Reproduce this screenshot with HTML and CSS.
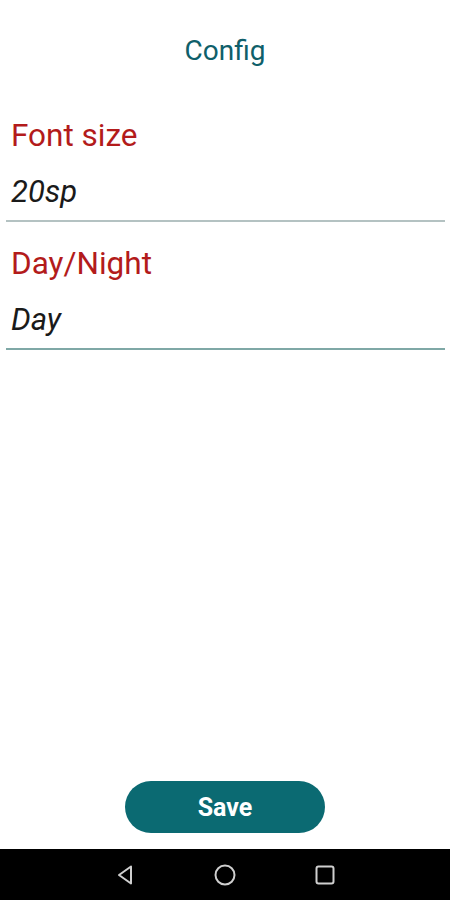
FILE: index.html
```html
<!DOCTYPE html>
<html>
<head>
<meta charset="utf-8">
<link rel="stylesheet" href="styles.css">
</head>
<body>
<div class="screen">
  <header class="title">Config</header>
  <main class="form">
    <div class="field">
      <div class="label">Font size</div>
      <div class="value">20sp</div>
      <div class="rule rule-gray"></div>
    </div>
    <div class="field">
      <div class="label">Day/Night</div>
      <div class="value">Day</div>
      <div class="rule rule-teal"></div>
    </div>
  </main>
  <div class="actions">
    <button class="save">Save</button>
  </div>
  <nav class="navbar">
    <svg class="nav-icon" width="24" height="24" viewBox="0 0 24 24"><path d="M18 3.5 L6 12 L18 20.5 Z" fill="none" stroke="#cfcfcf" stroke-width="2" stroke-linejoin="round"/></svg>
    <svg class="nav-icon" width="24" height="24" viewBox="0 0 24 24"><circle cx="12" cy="12" r="9.5" fill="none" stroke="#cfcfcf" stroke-width="2"/></svg>
    <svg class="nav-icon" width="24" height="24" viewBox="0 0 24 24"><rect x="3.5" y="3.5" width="17" height="17" rx="2" fill="none" stroke="#cfcfcf" stroke-width="2"/></svg>
  </nav>
</div>
</body>
</html>
```

FILE: styles.css
```css
html, body {
  margin: 0;
  padding: 0;
  background: #ffffff;
}
.screen {
  width: 450px;
  height: 900px;
  display: flex;
  flex-direction: column;
  font-family: Roboto, "Noto Sans", sans-serif;
}
.title {
  margin-top: 34px;
  height: 34px;
  line-height: 34px;
  text-align: center;
  font-size: 28px;
  color: #0f5f6a;
}
.form {
  flex: 1;
  padding: 0 5px 0 6px;
  margin-top: 46px;
}
.field {
  display: flex;
  flex-direction: column;
  margin-bottom: 20px;
}
.label {
  padding-left: 5px;
  font-size: 31.5px;
  line-height: 44px;
  height: 44px;
  color: #b31b1b;
}
.value {
  padding-left: 5px;
  margin-top: 12px;
  font-size: 31px;
  font-style: italic;
  line-height: 44px;
  height: 44px;
  color: #1a1a1a;
}
.rule {
  height: 2px;
  margin-top: 6px;
}
.rule-gray { background: #b4c2c2; }
.rule-teal { background: #7fa8a6; }
.actions {
  display: flex;
  justify-content: center;
  padding-bottom: 16px;
}
.save {
  width: 200px;
  height: 52px;
  border: none;
  border-radius: 26px;
  background: #0b6a72;
  color: #ffffff;
  font-family: Roboto, "Noto Sans", sans-serif;
  font-weight: bold;
  font-size: 25px;
}
.navbar {
  height: 51px;
  background: #000000;
  display: flex;
  justify-content: center;
  align-items: center;
  gap: 76px;
}
.nav-icon {
  display: block;
}
```
